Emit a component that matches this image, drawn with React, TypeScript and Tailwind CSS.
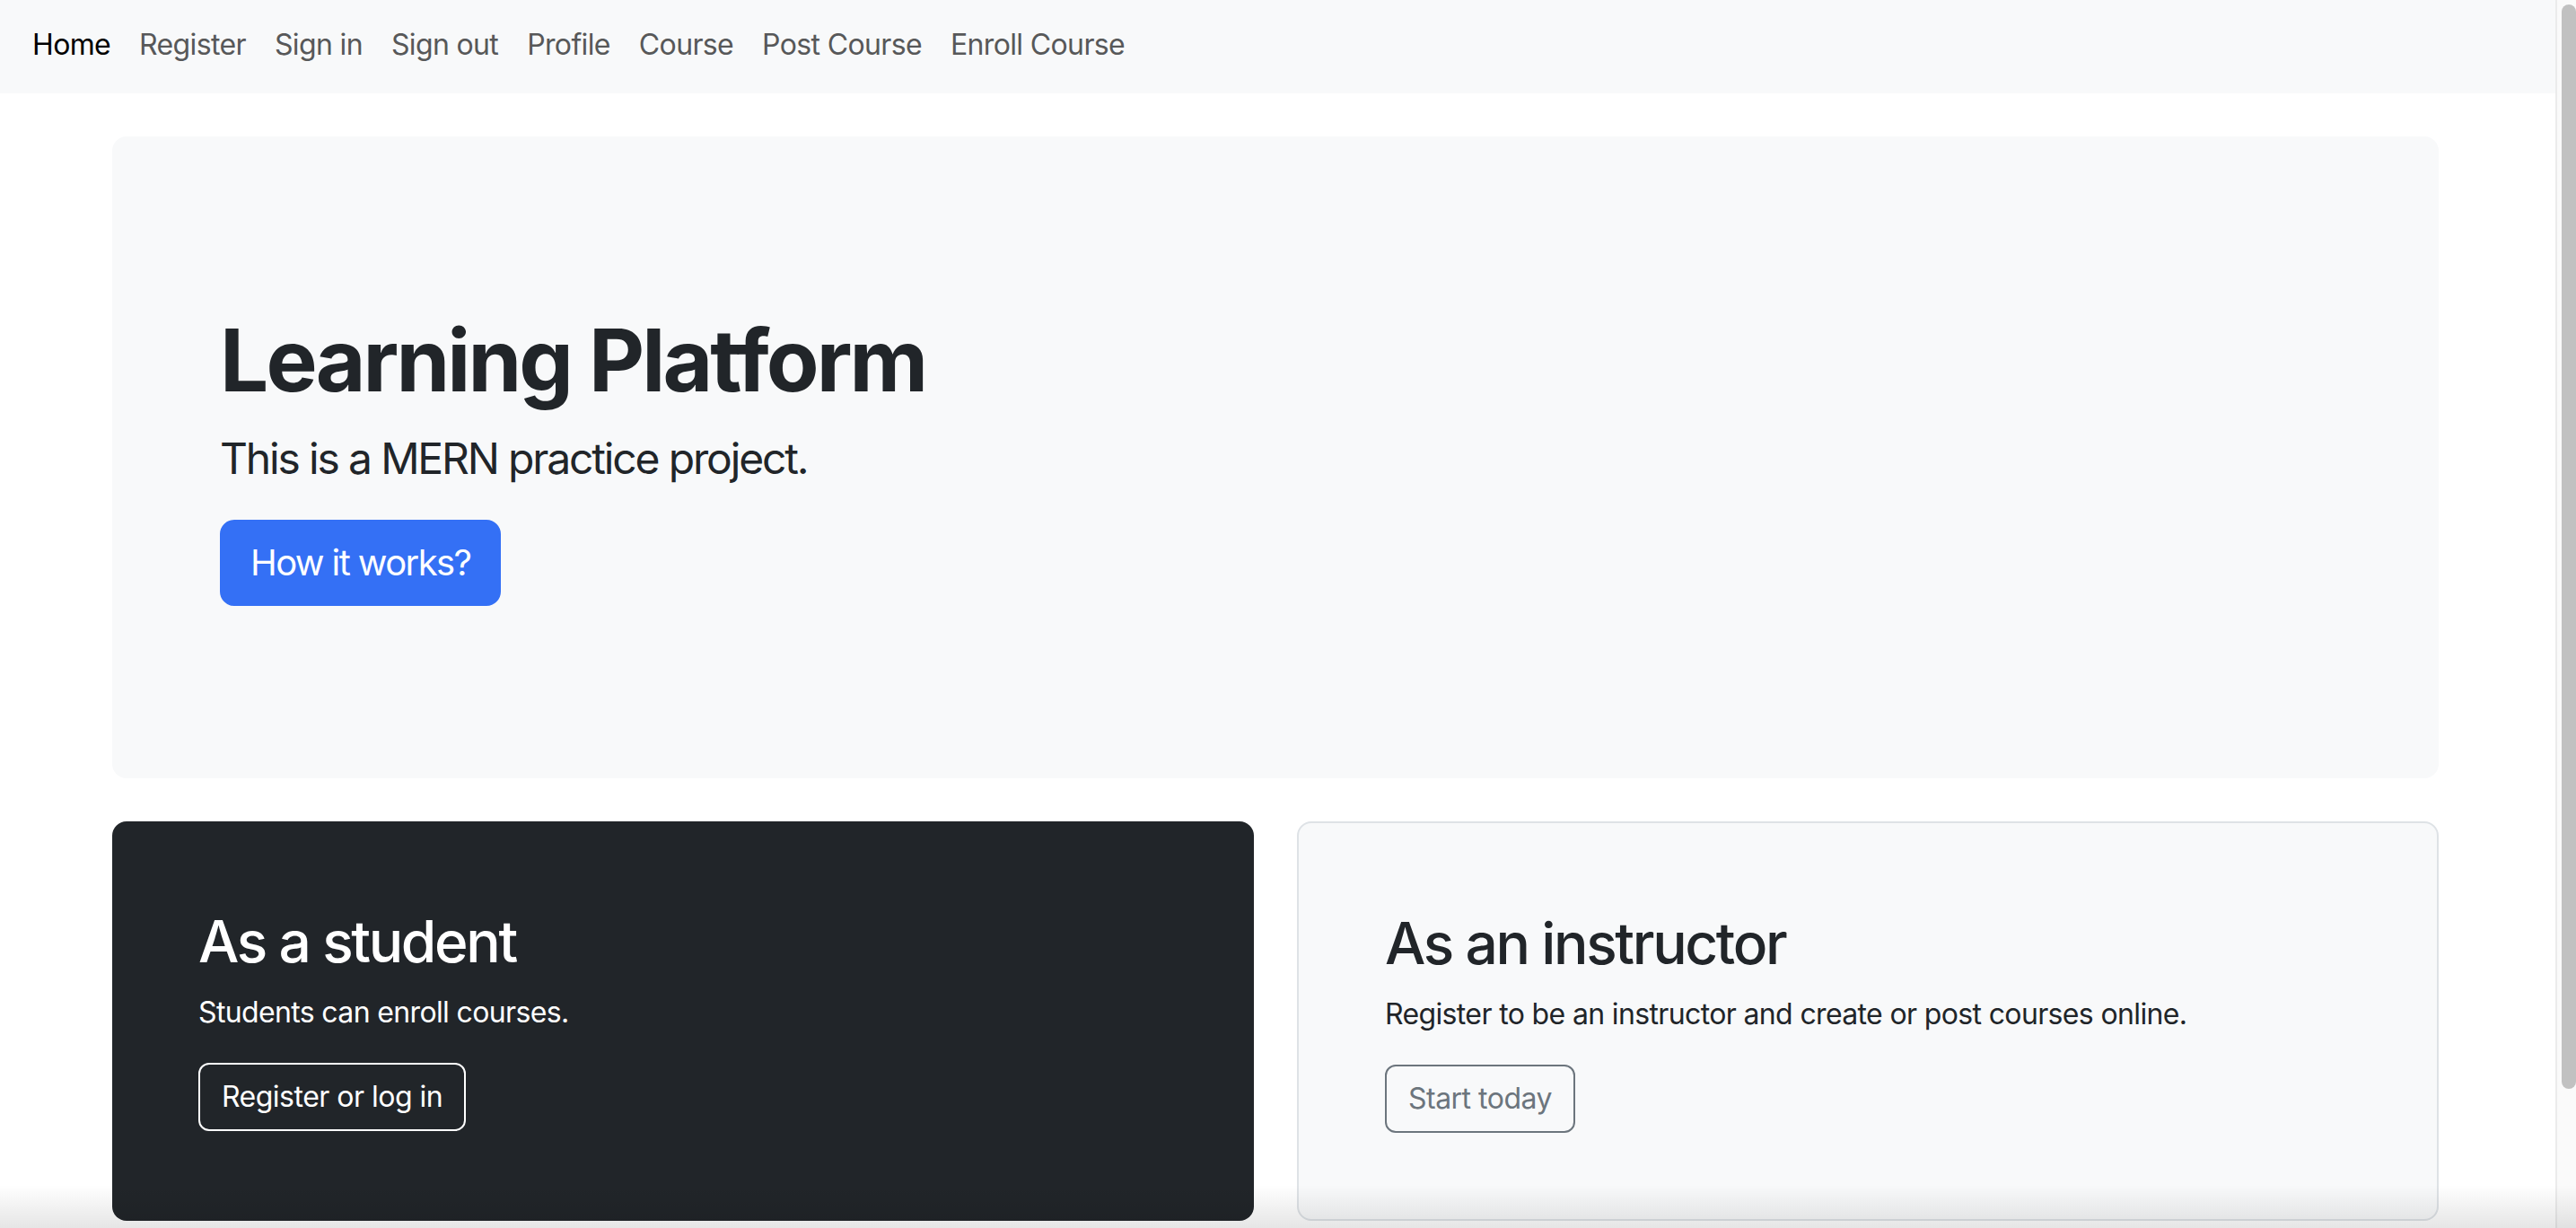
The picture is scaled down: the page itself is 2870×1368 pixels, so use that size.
const navLinks = [
  "Home",
  "Register",
  "Sign in",
  "Sign out",
  "Profile",
  "Course",
  "Post Course",
  "Enroll Course",
];

function NavBar() {
  return (
    <nav className="h-[104px] bg-[#f8f9fa] pl-[20px] pt-[26px]">
      <ul className="flex">
        {navLinks.map((link, i) => (
          <li key={link}>
            <a
              href="#"
              className={`block px-4 text-[32px] leading-[48px] tracking-[-0.02em] ${
                i === 0 ? "text-black" : "text-[#575859]"
              }`}
            >
              {link}
            </a>
          </li>
        ))}
      </ul>
    </nav>
  );
}

function Hero() {
  return (
    <div className="rounded-2xl bg-[#f8f9fa] p-24">
      <div className="px-6 py-24">
        <h1 className="mb-4 text-[96px] font-bold leading-[1.2] tracking-[-0.03em]">
          Learning Platform
        </h1>
        <p className="mb-8 text-[48px] leading-[72px] tracking-[-0.045em]">
          This is a MERN practice project.
        </p>
        <button
          type="button"
          className="rounded-2xl border-2 border-[#3470f5] bg-[#3470f5] px-8 py-4 text-[40px] leading-[60px] tracking-[-0.04em] text-white"
        >
          How it works?
        </button>
      </div>
    </div>
  );
}

function Cards() {
  return (
    <div className="mt-12 grid grid-cols-2 gap-12">
      <div className="rounded-2xl bg-[#212529] p-24 text-white">
        <h2 className="mb-4 text-[64px] font-medium leading-[1.2] tracking-[-0.037em]">
          As a student
        </h2>
        <p className="mb-8 text-[32px] leading-[48px] tracking-[-0.02em]">
          Students can enroll courses.
        </p>
        <button
          type="button"
          className="rounded-xl border-2 border-white px-6 py-3 text-[32px] leading-[48px] tracking-[-0.016em] text-white"
        >
          Register or log in
        </button>
      </div>
      <div className="rounded-2xl border-2 border-[#dee2e6] bg-[#f8f9fa] p-24">
        <h2 className="mb-4 text-[64px] font-medium leading-[1.2] tracking-[-0.037em]">
          As an instructor
        </h2>
        <p className="mb-8 text-[32px] leading-[48px] tracking-[-0.02em]">
          Register to be an instructor and create or post courses online.
        </p>
        <button
          type="button"
          className="rounded-xl border-2 border-[#6c757d] px-6 py-3 text-[32px] leading-[48px] tracking-[-0.016em] text-[#6c757d]"
        >
          Start today
        </button>
      </div>
    </div>
  );
}

export default function App() {
  return (
    <div
      className="relative flex h-screen w-full overflow-hidden bg-white text-[#212529]"
      style={{ fontFamily: "Inter, 'Noto Sans', sans-serif" }}
    >
      <div className="min-w-0 flex-1">
        <NavBar />
        <main className="ml-[125px] w-[2592px] pt-12">
          <Hero />
          <Cards />
        </main>
      </div>
      {/* fake browser scrollbar */}
      <div className="w-[23px] shrink-0 border-l-2 border-[#ebebeb] bg-[#fafafa] pl-[5px] pt-[5px]">
        <div className="h-[1208px] w-4 rounded-full bg-[#c1c1c1]" />
      </div>
      <div className="pointer-events-none absolute inset-x-0 bottom-0 h-[48px] bg-gradient-to-b from-transparent to-black/10" />
    </div>
  );
}
